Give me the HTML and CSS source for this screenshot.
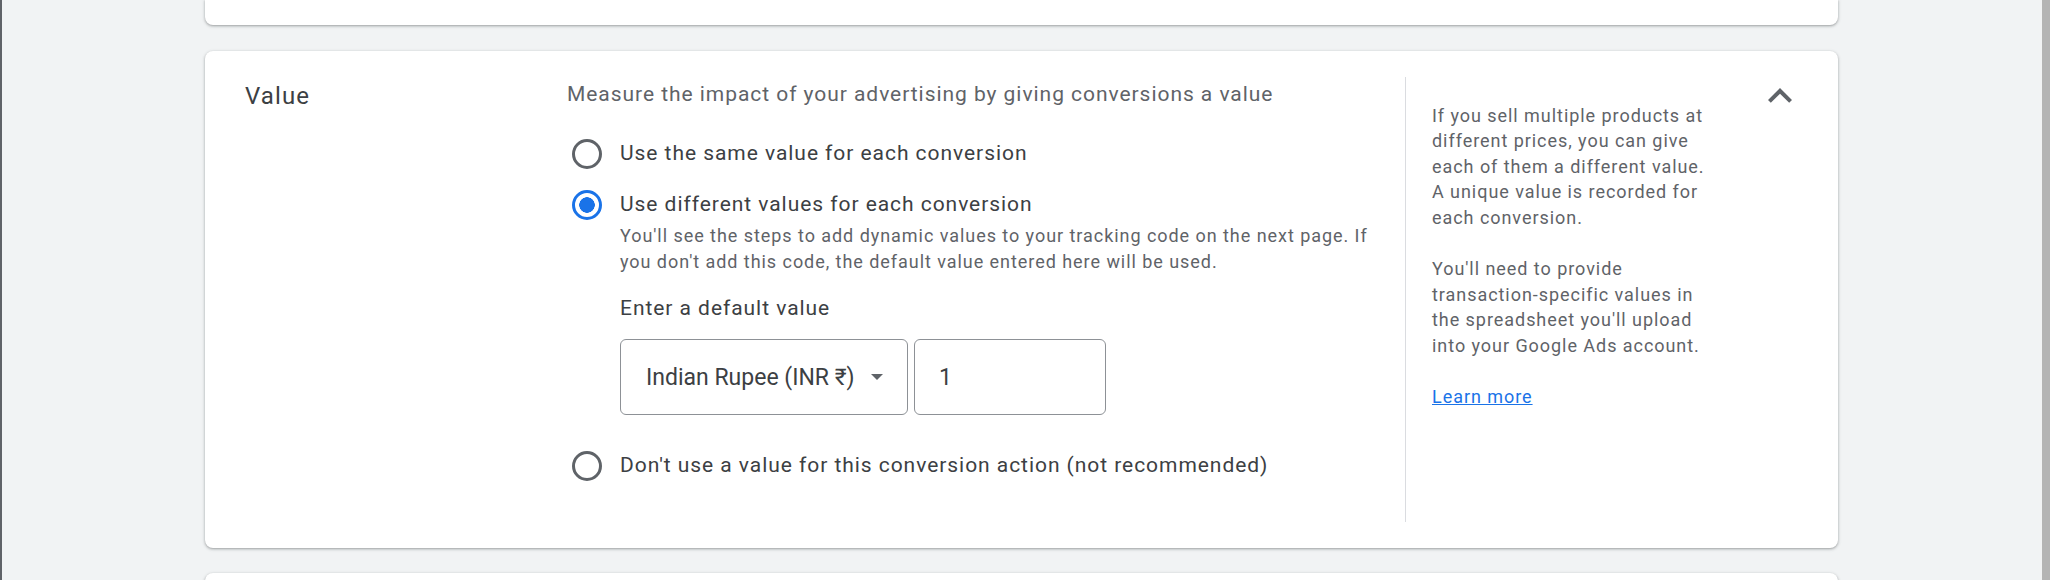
FILE: index.html
```html
<!DOCTYPE html>
<html lang="en">
<head>
  <meta charset="UTF-8">
  <meta name="viewport" content="width=device-width, initial-scale=1.0">
  <title>Conversion action - Value</title>
  <link rel="stylesheet" href="styles.css">
</head>
<body>
  <div class="window">
    <main class="content">
      <section class="card card-cut"></section>

      <section class="card value-card">
        <h2 class="card-title">Value</h2>

        <div class="card-body">
          <p class="lead">Measure the impact of your advertising by giving conversions a value</p>

          <div class="radio-group">
            <label class="radio-option option-same">
              <input type="radio" name="valueType" value="same">
              <span class="radio-label">Use the same value for each conversion</span>
            </label>

            <div class="radio-option option-different">
              <input type="radio" name="valueType" value="different" id="valueDifferent" checked>
              <div class="radio-content">
                <label class="radio-label" for="valueDifferent">Use different values for each conversion</label>
                <div class="radio-hint">You'll see the steps to add dynamic values to your tracking code on the next page. If you don't add this code, the default value entered here will be used.</div>
                <div class="field-label">Enter a default value</div>
                <div class="value-fields">
                  <div class="select">
                    <span class="select-text">Indian Rupee (INR ₹)</span>
                    <span class="select-arrow"></span>
                  </div>
                  <input type="text" class="text-field" value="1">
                </div>
              </div>
            </div>

            <label class="radio-option option-none">
              <input type="radio" name="valueType" value="none">
              <span class="radio-label">Don't use a value for this conversion action (not recommended)</span>
            </label>
          </div>
        </div>

        <aside class="help-panel">
          <p>If you sell multiple products at different prices, you can give each of them a different value. A unique value is recorded for each conversion.</p>
          <p>You'll need to provide transaction-specific values in the spreadsheet you'll upload into your Google Ads account.</p>
          <p><a href="#">Learn more</a></p>
        </aside>

        <button class="collapse-button" aria-label="Collapse">
          <svg width="48" height="48" viewBox="0 0 24 24"><path d="M12 8l-6 6 1.41 1.41L12 10.83l4.59 4.58L18 14z"/></svg>
        </button>
      </section>

      <section class="card card-next"></section>
    </main>
    <div class="scroll-track"></div>
  </div>
</body>
</html>
```

FILE: styles.css
```css
html, body {
  margin: 0;
  height: 100%;
  overflow: hidden;
}
body {
  font-family: Roboto, 'Noto Sans', Arial, sans-serif;
  background-color: #f1f3f4;
  color: #3c4043;
}
.window {
  display: flex;
  height: 100%;
  border-left: 2px solid #5f6368;
}
.content {
  flex: 1;
  padding-left: 203px;
}
.scroll-track {
  width: 8px;
  background-color: #b4b4b4;
}
.card {
  width: 1633px;
  box-sizing: border-box;
  background-color: #fff;
  border-radius: 8px;
  box-shadow: 0 1px 2px rgba(60, 64, 67, 0.3), 0 1px 3px 1px rgba(60, 64, 67, 0.15);
}
.card-cut {
  height: 25px;
  border-radius: 0 0 8px 8px;
  margin-bottom: 26px;
}
.card-next {
  height: 40px;
  margin-top: 25px;
}
.value-card {
  display: flex;
  align-items: stretch;
  padding: 26px 34px 26px 40px;
  letter-spacing: 0.95px;
}
.card-title {
  flex: 0 0 322px;
  margin: 3px 0 0;
  font-size: 24px;
  line-height: 32px;
  font-weight: 400;
  letter-spacing: 1.1px;
  color: #3c4043;
}
.card-body {
  flex: 1;
  padding: 0 24px 41px 0;
}
.lead {
  margin: 3px 0 0;
  font-size: 21px;
  line-height: 28px;
  color: #5f6368;
}
.radio-group {
  margin-top: 31px;
}
.radio-option {
  display: flex;
  align-items: flex-start;
  gap: 18px;
  padding-left: 5px;
}
.option-different {
  margin-top: 21px;
}
.option-none {
  margin-top: 36px;
}
.radio-option input[type="radio"] {
  appearance: none;
  flex: none;
  width: 30px;
  height: 30px;
  margin: 0;
  border: 3px solid #5f6368;
  border-radius: 50%;
  box-sizing: border-box;
}
.radio-option input[type="radio"]:checked {
  border-color: #1a73e8;
  background: radial-gradient(circle, #1a73e8 0 7.5px, transparent 8px);
}
.radio-label {
  display: block;
  font-size: 21px;
  line-height: 28px;
  color: #3c4043;
}
.radio-content {
  flex: 1;
}
.radio-hint {
  margin-top: 5px;
  font-size: 18px;
  line-height: 26px;
  color: #5f6368;
}
.field-label {
  margin-top: 19px;
  font-size: 21px;
  line-height: 28px;
  color: #3c4043;
}
.value-fields {
  display: flex;
  gap: 6px;
  margin-top: 17px;
}
.select,
.text-field {
  height: 76px;
  box-sizing: border-box;
  border: 1px solid #8d9196;
  border-radius: 6px;
  font-family: inherit;
  font-size: 23px;
  letter-spacing: 0;
  color: #3c4043;
}
.select {
  display: flex;
  align-items: center;
  justify-content: space-between;
  width: 288px;
  padding: 0 24px 0 25px;
}
.select-arrow {
  width: 0;
  height: 0;
  border-left: 6.5px solid transparent;
  border-right: 6.5px solid transparent;
  border-top: 6.5px solid #5f6368;
}
.text-field {
  width: 192px;
  padding: 0 24px;
  outline: none;
}
.help-panel {
  flex: 0 0 351px;
  box-sizing: border-box;
  padding: 25.5px 0 0 26px;
  border-left: 1px solid #dadce0;
  font-size: 18px;
  line-height: 25.6px;
  color: #5f6368;
}
.help-panel p {
  width: 282px;
  margin: 0 0 25.6px;
}
.help-panel a {
  color: #1a73e8;
}
.collapse-button {
  align-self: flex-start;
  width: 48px;
  height: 48px;
  margin-top: -5px;
  padding: 0;
  border: none;
  background: none;
  cursor: pointer;
}
.collapse-button svg {
  display: block;
  fill: #5f6368;
}
```
